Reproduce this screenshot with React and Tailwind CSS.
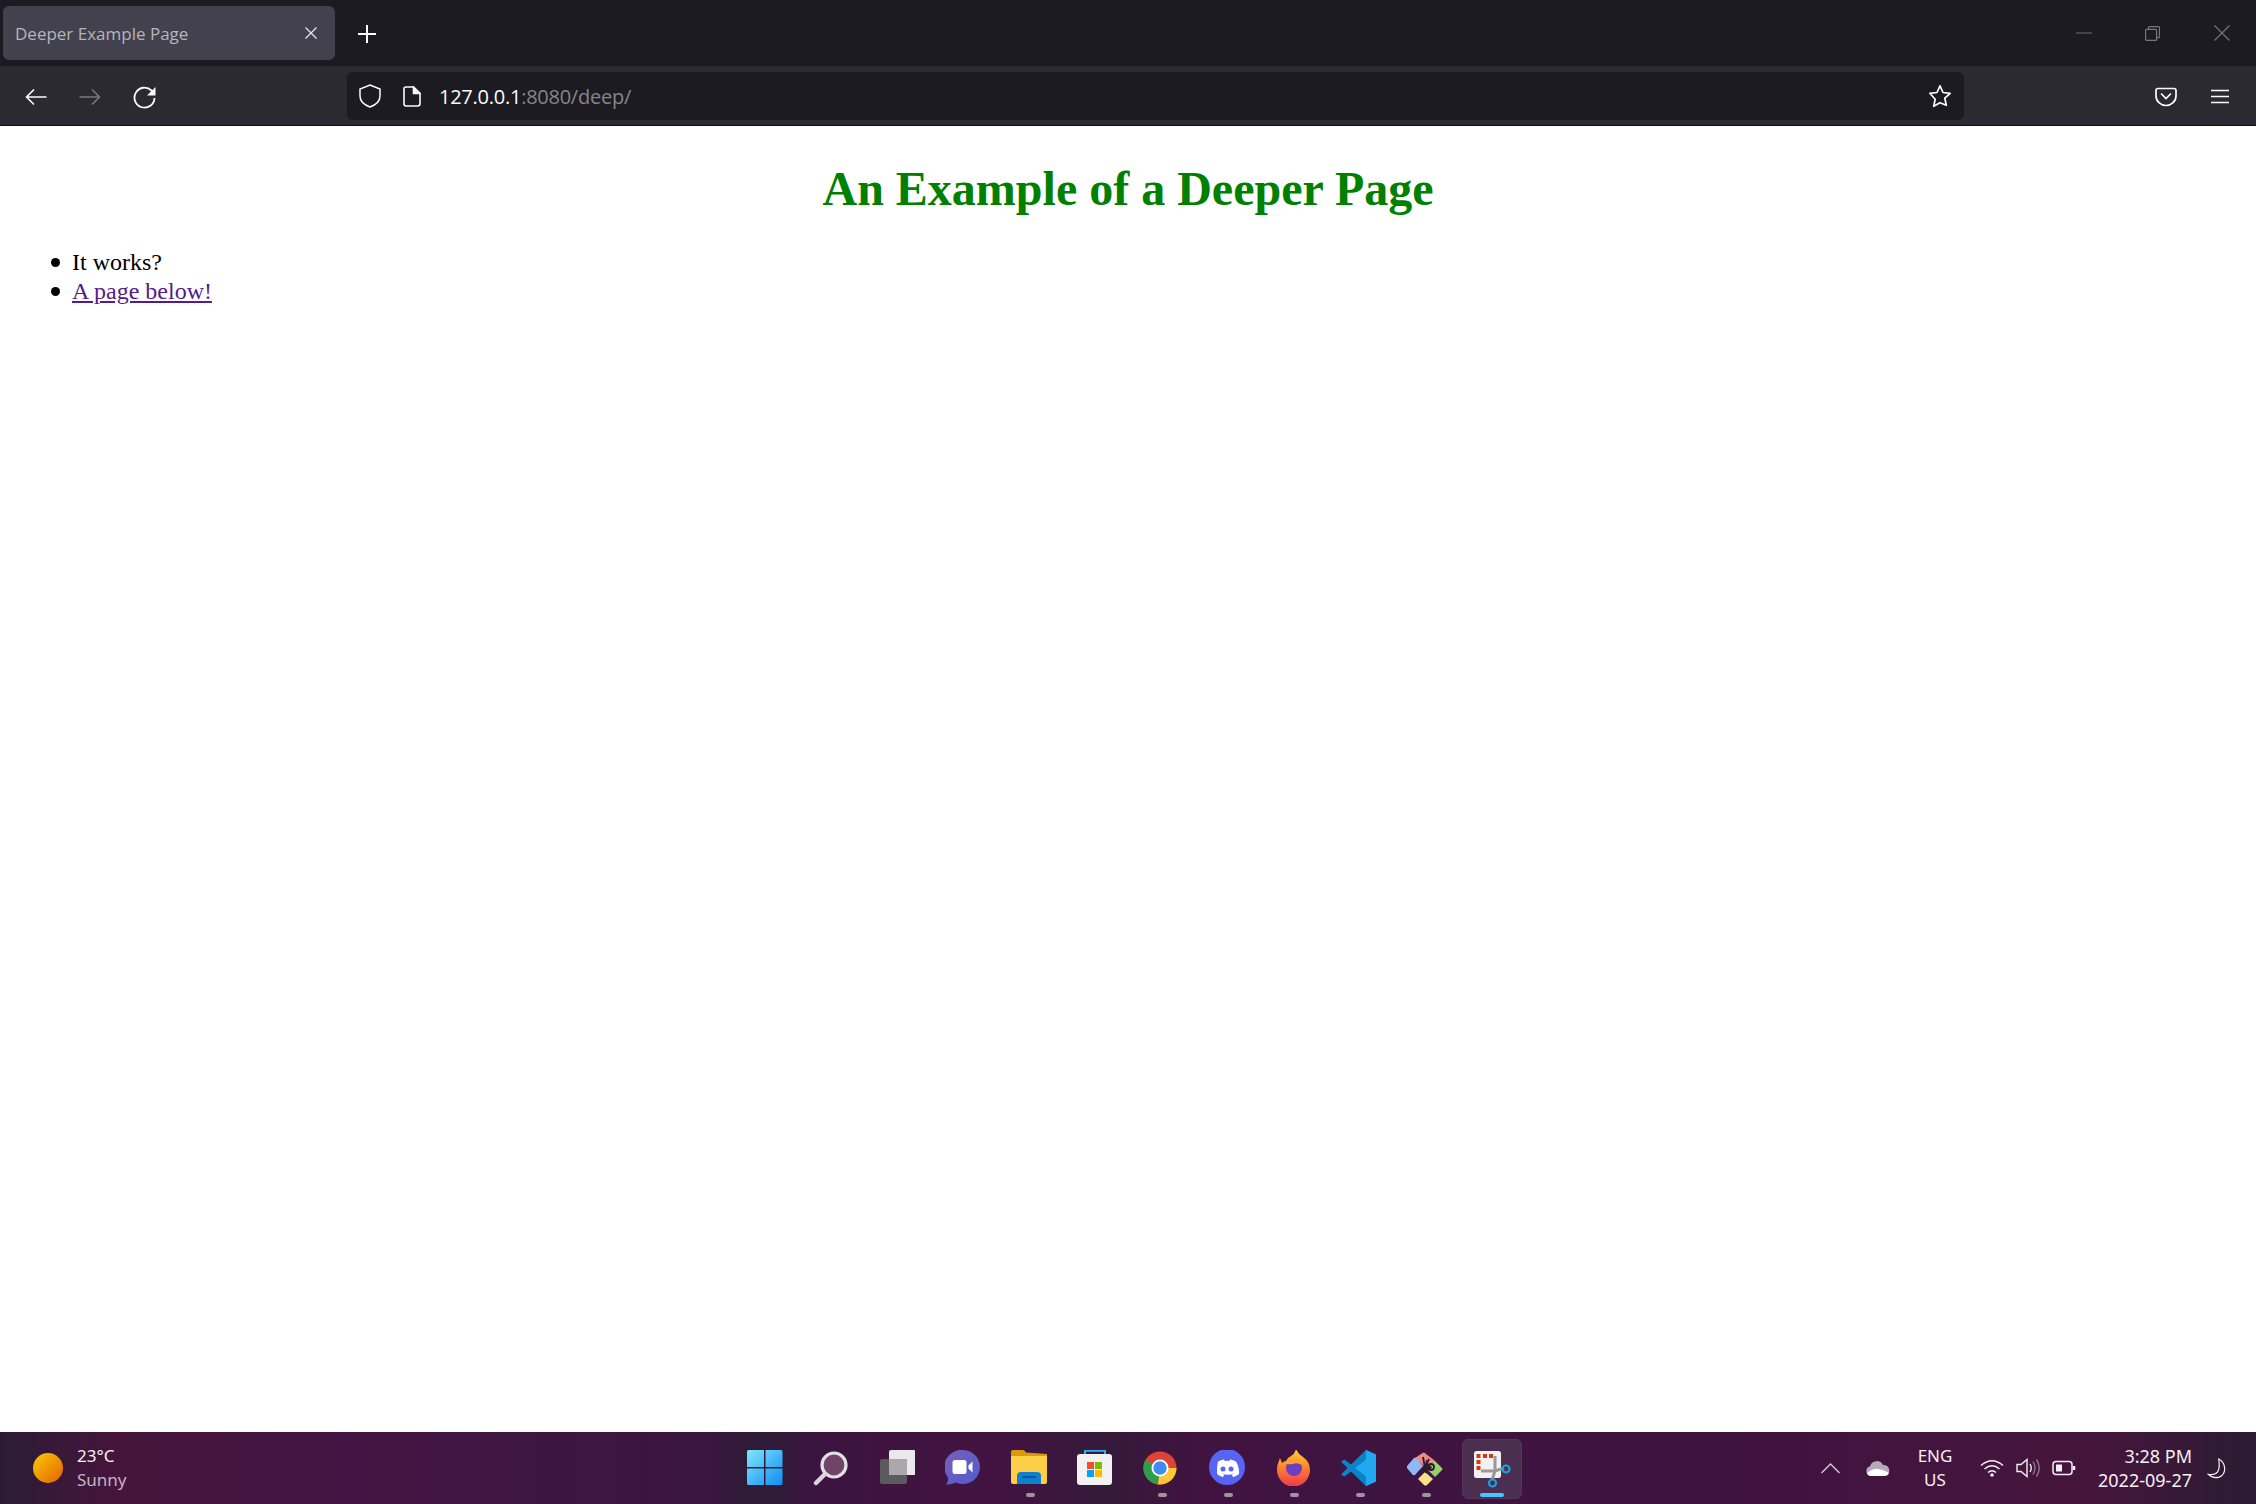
const ui = { fontFamily: '"Noto Sans", "Open Sans", sans-serif' };

function TabBar() {
  return (
    <div className="h-[66px] bg-[#1c1b22] flex items-start pl-[3px] shrink-0">
      <div className="w-[332px] h-[54px] mt-[6px] rounded-[6px] bg-[#42414d] flex items-center justify-between pl-[12px] pr-[18px]">
        <span className="font-['Open_Sans',sans-serif] text-[17px] text-[#b6b5bb] whitespace-nowrap mt-[1px]">Deeper Example Page</span>
        <svg width="12" height="12" viewBox="0 0 12 12" stroke="#e6e6e8" strokeWidth="1.3"><path d="M0.500 0.500l11 11M11.500 0.500l-11 11" /></svg>
      </div>
      <div className="ml-[23px] mt-[25px]">
        <svg className="block" width="18" height="18" viewBox="0 0 18 18" stroke="#fbfbfe" strokeWidth="2"><path d="M9 0v18M0 9h18" /></svg>
      </div>
      <div className="ml-auto flex items-center h-[66px]">
        <div className="w-[69px] flex justify-center"><svg width="16" height="2" stroke="#6e6e72" strokeWidth="1"><path d="M0 1h16" /></svg></div>
        <div className="w-[69px] flex justify-center"><svg width="15" height="15" viewBox="0 0 15 15" fill="none" stroke="#77777b" strokeWidth="1.2"><rect x="0.600" y="3.400" width="11" height="11" rx="1" /><path d="M3.500 3.400V1.600q0-1 1-1h9q1 0 1 1v9q0 1-1 1h-1.900" /></svg></div>
        <div className="w-[69px] flex justify-center"><svg width="16" height="16" viewBox="0 0 16 16" stroke="#77777b" strokeWidth="1.100"><path d="M0.500 0.500l15 15M15.500 0.500l-15 15" /></svg></div>
      </div>
    </div>
  );
}

function NavBar() {
  return (
    <div className="h-[60px] bg-[#2b2a33] flex items-start shrink-0 border-b border-[#0c0c0d]">
      <div className="flex items-center w-[347px] h-[60px] pl-[25px] pt-[2px] gap-[32px]">
        <svg width="22" height="18" viewBox="0 0 22 18" fill="none" stroke="#fbfbfe" strokeWidth="1.600"><path d="M21.500 9H2M9 1.500L1.500 9 9 16.500" /></svg>
        <svg width="22" height="18" viewBox="0 0 22 18" fill="none" stroke="#78777d" strokeWidth="1.600"><path d="M0.500 9H20M13 1.500L20.500 9 13 16.500" /></svg>
        <svg width="23" height="23" viewBox="0 0 23 23" fill="none" stroke="#fbfbfe" strokeWidth="1.800"><path d="M21.500 12A10 10 0 1 1 18.500 4.500L20 6" /><path d="M22.500 1v8.500H14z" fill="#fbfbfe" stroke="none" /></svg>
      </div>
      <div className="mt-[6px] w-[1617px] h-[48px] bg-[#1c1b22] rounded-[6px] flex items-center pl-[12px] pr-[12px]">
        <svg width="22" height="24" viewBox="0 0 22 24" fill="none" stroke="#fbfbfe" strokeWidth="1.500"><path d="M11 1L21 5V12C21 17.500 16.500 21 11 23 5.500 21 1 17.500 1 12V5Z" /></svg>
        <svg className="ml-[22px]" width="18" height="21" viewBox="0 0 18 21" fill="none" stroke="#fbfbfe" strokeWidth="1.600"><path d="M3 1h7.500L17 7.500V17.500q0 2.500-2.500 2.500H3q-2 0-2-2.500V3q0-2 2-2z" /><path d="M10.500 1L17 7.500H10.500z" fill="#fbfbfe" /></svg>
        <span className="ml-[18px] mt-[2px] font-['Open_Sans',sans-serif] text-[20px] tracking-[-0.25px] whitespace-nowrap"><span className="text-[#fbfbfe]">127.0.0.1</span><span className="text-[#86858b]">:8080/deep/</span></span>
        <svg className="ml-auto" width="24" height="24" viewBox="0 0 24 24" fill="none" stroke="#fbfbfe" strokeWidth="1.700" strokeLinejoin="round"><path d="M12 1.800l3 6.700 7.200.8-5.400 4.900 1.500 7.100L12 18.700l-6.300 3.600 1.500-7.100L1.800 9.300 9 8.500z" /></svg>
      </div>
      <div className="ml-auto h-[60px] flex items-center pr-[27px] pt-[1px] gap-[34px]">
        <svg width="22" height="20" viewBox="0 0 22 20" fill="none" stroke="#fbfbfe" strokeWidth="1.700"><path d="M3 1.500h16q2 0 2 2V9a10 9.500 0 0 1-20 0V3.500q0-2 2-2z" /><path d="M6.500 7l4.500 4.500L15.500 7" strokeLinecap="round" /></svg>
        <svg width="18" height="15" viewBox="0 0 18 15" stroke="#fbfbfe" strokeWidth="1.700"><path d="M0 1.500h18M0 7.500h18M0 13.500h18" /></svg>
      </div>
    </div>
  );
}

function Bullet({ children }) {
  return <li className="relative before:absolute before:left-[-21px] before:top-[10px] before:w-[9px] before:h-[9px] before:rounded-full before:bg-black">{children}</li>;
}

function Page() {
  return (
    <main className="flex-1 bg-white text-black font-['Liberation_Serif',serif] text-[24px] leading-[29px]">
      <h1 className="text-center text-[48px] leading-[55px] font-bold text-[#008000] pt-[35px]">An Example of a Deeper Page</h1>
      <ul className="list-none pl-[72px] mt-[32px]">
        <Bullet>It works?</Bullet>
        <Bullet><a href="#" className="text-[#551a8b] underline">A page below!</a></Bullet>
      </ul>
    </main>
  );
}

function Item({ children, dot, active }) {
  return (
    <div className="relative w-[66px] h-full flex items-center justify-center">
      {active && <div className="absolute left-[4px] top-[7px] w-[60px] h-[60px] rounded-[6px] bg-[#4b2f50] border border-[#523857]" />}
      <div className="relative w-[36px] h-[36px]">{children}</div>
      {dot && <div className="absolute left-[30px] bottom-[7px] w-[9px] h-[4px] rounded-full bg-[#a3929f]" />}
      {active && <div className="absolute left-[22px] bottom-[7px] w-[24px] h-[4px] rounded-full bg-[#4cc2ff]" />}
    </div>
  );
}

const S = ({ children }) => <svg width="36" height="36" viewBox="0 0 36 36">{children}</svg>;

function Start() {
  return <S><defs><linearGradient id="st" x1="0" y1="0" x2="1" y2="1"><stop offset="0" stopColor="#7fe6ff" /><stop offset="1" stopColor="#0f8df0" /></linearGradient></defs>
    <path d="M0 1.500Q0 0 1.500 0H17v17H0zM18.500 0H34q1.500 0 1.500 1.500V17h-17zM0 18.500h17V35H1.500Q0 35 0 33.500zM18.500 18.500h17v15q0 1.500-1.500 1.500H18.500z" fill="url(#st)" /></S>;
}
function Search() {
  return <S><circle cx="21" cy="15" r="12" fill="#6f4468" stroke="#e4e1e6" strokeWidth="3.200" /><path d="M12 24L3 33" stroke="#d9d5da" strokeWidth="4.500" strokeLinecap="round" /></S>;
}
function TaskView() {
  return <S><rect x="1" y="9" width="27" height="25" rx="2" fill="#5c5a5e" /><rect x="10" y="0" width="27" height="25" rx="2" fill="#e9e9e9" /><rect x="10" y="9" width="18" height="16" fill="#aaa8aa" /></S>;
}
function Chat() {
  return <S><defs><linearGradient id="ch" x1="0" y1="0" x2="1" y2="1"><stop offset="0" stopColor="#7a5fb8" /><stop offset="1" stopColor="#4e5bcf" /></linearGradient></defs>
    <path d="M18 0a17 17 0 1 1-7 32.500Q6 35 1 34.500q2.500-3 2-7A17 17 0 0 1 18 0z" fill="url(#ch)" /><rect x="7.500" y="10" width="14" height="14" rx="2.500" fill="#fff" /><path d="M23.500 15.500L27.500 11.500v11L23.500 18.500z" fill="#fff" /></S>;
}
function Explorer() {
  return <S><path d="M0 2q0-2 2-2h10q2 0 3 2.500L36 4v8H0z" fill="#d99b0c" /><path d="M0 6h36v26q0 2-2 2H2q-2 0-2-2z" fill="#fdcf47" /><path d="M6 34v-8q0-4 4-4h16q4 0 4 4v8z" fill="#0f7fd0" /><rect x="11" y="26" width="14" height="2" fill="#0a5aa0" /></S>;
}
function Store() {
  return <S><path d="M8 4V0.800h20V4" fill="none" stroke="#29b6ee" strokeWidth="2" /><rect x="0" y="4" width="35" height="31" rx="3" fill="#f4f1f2" /><rect x="10" y="12" width="7" height="7" fill="#f25022" /><rect x="18" y="12" width="7" height="7" fill="#7fba00" /><rect x="10" y="20" width="7" height="7" fill="#00a4ef" /><rect x="18" y="20" width="7" height="7" fill="#ffb900" /></S>;
}
function Chrome() {
  return <S><circle cx="17" cy="18" r="16.500" fill="#dd4436" /><path d="M17 18L2.500 9.800A16.500 16.500 0 0 0 15 34.400z" fill="#2f9e4a" /><path d="M17 18h16.500A16.500 16.500 0 0 1 15 34.400z" fill="#fcc934" /><circle cx="17" cy="18" r="8.500" fill="#fff" /><circle cx="17" cy="18" r="6.700" fill="#3f8bf0" /></S>;
}
function Discord() {
  return <S><circle cx="18" cy="17" r="18" fill="#5865f2" /><path d="M9 11.500q4-2 6-2l.7 1.500q2.300-.3 4.600 0l.7-1.500q2 0 6 2 3.500 5.500 3 12.500-3 2.300-6 3l-1.400-2.300q1.200-.5 2.200-1.200-5.800 2.700-11.600 0 1 .7 2.200 1.200L14 27q-3-.7-6-3-.5-7 1-12.500z" fill="#fff" /><circle cx="14" cy="19" r="2.500" fill="#5865f2" /><circle cx="22" cy="19" r="2.500" fill="#5865f2" /></S>;
}
function Firefox() {
  return <S><defs><linearGradient id="ff" x1="0.500" y1="0" x2="0.500" y2="1"><stop offset="0" stopColor="#ffd52e" /><stop offset="0.450" stopColor="#ff8a2a" /><stop offset="1" stopColor="#f0364f" /></linearGradient></defs>
    <path d="M21 -1q2 5 7 8 7 5 7 13a16.500 16.500 0 0 1-33 0q0-5 1.500-8l1.500-4 2 5q2-2 4-2 1-3 5-5 4-2 5-7z" fill="url(#ff)" /><circle cx="19" cy="18" r="8" fill="#6e3ec0" /><path d="M9 13q5-4 12-3 5 1 6 5-5-3-9-1-5 1-9-1z" fill="#ffa126" /></S>;
}
function VSCode() {
  return <S><path d="M25 0l10 4.500v27L25 36 10 21.500 3.500 26.500 0 24.500 6.500 18 0 11.500l3.500-2 6.500 5z" fill="#0a83c9" /><path d="M25 0l10 4.500v27L25 36zM25 9.500L14 18l11 8.500z" fill="#20a9ee" fillRule="evenodd" /></S>;
}
function GitApp() {
  return <S><path d="M14 4q3-3 5 0l8 6q2 2 0 3l-4 3q-3-3-4-7l-1 8L8 8z" fill="#ec8a86" /><path d="M7 8q1-1 3 1l6 7-8 9q-2 1-3-1L0 18q-1-1 0-2z" fill="#8eb9f5" /><path d="M28 11l7 7q1 1 0 2l-7 7-7-7q3-1 4-2-3-4 3-7z" fill="#93d46a" /><path d="M18 22l8 7-6 6q-2 1-3 0l-6-6z" fill="#f7e185" /><path d="M16 7l3 16M22 9l-6 12" stroke="#2a1a2a" strokeWidth="1.800" /><circle cx="24" cy="17" r="3" fill="none" stroke="#2a1a2a" strokeWidth="1.800" /></S>;
}
function Snip() {
  return <svg width="38" height="38" viewBox="0 0 38 38" className="overflow-visible"><rect x="1" y="1" width="27" height="27" rx="2.500" fill="#f2f0f1" /><rect x="3.500" y="4" width="4" height="4" fill="#d13a0f" /><rect x="10" y="4" width="4" height="4" fill="#d13a0f" /><rect x="16" y="4" width="4" height="4" fill="#d13a0f" /><rect x="3.500" y="10" width="4" height="4" fill="#d13a0f" /><rect x="3.500" y="16" width="4" height="4" fill="#d13a0f" /><path d="M22 6v15l-3 9M8 21h14l9-3" fill="none" stroke="#9a979a" strokeWidth="3" /><circle cx="33" cy="19" r="3.500" fill="none" stroke="#1d9fe0" strokeWidth="2.200" /><circle cx="19.500" cy="33" r="3.500" fill="none" stroke="#1d9fe0" strokeWidth="2.200" /></svg>;
}

function Taskbar() {
  return (
    <div className="h-[72px] shrink-0 flex items-stretch text-white bg-[linear-gradient(90deg,#2a1c33_0%,#45153c_5%,#431443_15%,#3a1640_31.500%,#2f1b37_33%,#2f1b37_34.500%,#3c1440_36%,#421341_44%,#351a3a_49%,#401340_53%,#3f1340_75%,#45153d_93%,#2d1b33_99%,#2d1b33_100%)]" style={ui}>
      <div className="flex-1 flex items-center">
        <div className="ml-[33px] w-[30px] h-[30px] rounded-full bg-[linear-gradient(135deg,#ffcc00,#e06000)]" />
        <div className="ml-[14px] leading-[24px] text-[17px] mt-[-1px]">
          <div className="text-[#f5f0f5]">23°C</div>
          <div className="text-[#c4b4c4]">Sunny</div>
        </div>
      </div>
      <div className="flex">
        <Item><Start /></Item>
        <Item><Search /></Item>
        <Item><TaskView /></Item>
        <Item><Chat /></Item>
        <Item dot><Explorer /></Item>
        <Item><Store /></Item>
        <Item dot><Chrome /></Item>
        <Item dot><Discord /></Item>
        <Item dot><Firefox /></Item>
        <Item dot><VSCode /></Item>
        <Item dot><GitApp /></Item>
        <Item active><Snip /></Item>
      </div>
      <div className="flex-1 flex items-center justify-end">
        <svg width="19" height="11" viewBox="0 0 19 11" fill="none" stroke="#d8cfd8" strokeWidth="1.300"><path d="M0.500 10L9.500 1l9 9" /></svg>
        <svg className="ml-[26px]" width="24" height="16" viewBox="0 0 24 16"><path d="M5 16a5 5 0 0 1-1-9.800A7 7 0 0 1 17 5a5.500 5.500 0 0 1 1.500 11z" fill="#b8a8ba" /><path d="M1 13q7-5 10-4 5 0 12 4-1 3-5 3H5q-3 0-4-3z" fill="#fff" /></svg>
        <div className="ml-[27px] w-[36px] text-center text-[17px] leading-[24px] text-[#f5f0f5]"><div>ENG</div><div>US</div></div>
        <svg className="ml-[27px]" width="24" height="18" viewBox="0 0 24 18" fill="none" stroke="#f5f0f5" strokeWidth="1.500"><path d="M1 6.500Q12-3 23 6.500M4.500 10Q12 3.500 19.500 10M8 13.500q4-3.500 8 0" /><circle cx="12" cy="16" r="1.800" fill="#f5f0f5" stroke="none" /></svg>
        <svg className="ml-[12px]" width="24" height="20" viewBox="0 0 24 20" fill="none" stroke="#f5f0f5" strokeWidth="1.400"><path d="M1 6.500h4L11 1.500v17L5 13.500H1z" /><path d="M14 6q2.500 4 0 8" /><path d="M17 3.500q4 6.500 0 13M20.500 1.500q5.500 8.500 0 17" stroke="#8a7a8e" /></svg>
        <svg className="ml-[12px]" width="24" height="16" viewBox="0 0 24 16" fill="none" stroke="#f5f0f5" strokeWidth="1.500"><rect x="1" y="1.500" width="19" height="13" rx="3" /><rect x="4" y="4.500" width="6" height="7" fill="#f5f0f5" stroke="none" /><path d="M22 6v4" strokeWidth="2.500" /></svg>
        <div className="ml-[21px] text-right text-[18px] leading-[24px] text-[#f5f0f5] w-[95px] whitespace-nowrap"><div>3:28 PM</div><div>2022-09-27</div></div>
        <svg className="ml-[15px] mr-[30px]" width="19" height="23" viewBox="0 0 21 23" fill="none" stroke="#f5f0f5" strokeWidth="1.300"><path d="M13 1q6 3 6.500 10t-6 10q-7 2-12-3 7 1 10-2.500T13 1z" /></svg>
      </div>
    </div>
  );
}

export default function App() {
  return (
    <div className="h-[1504px] w-[2256px] flex flex-col overflow-hidden bg-white">
      <TabBar />
      <NavBar />
      <Page />
      <Taskbar />
    </div>
  );
}
